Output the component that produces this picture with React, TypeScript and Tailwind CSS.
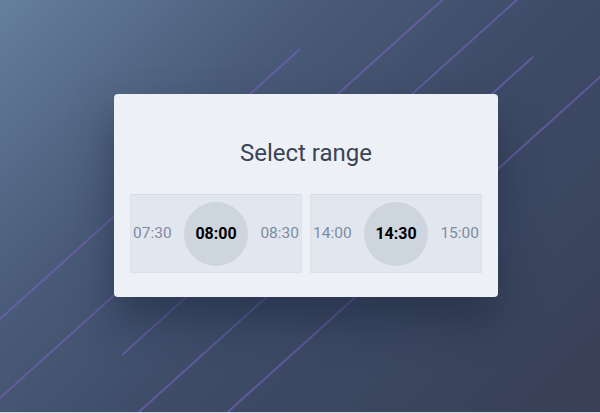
import React from "react";

const lines: [number, number, number, number][] = [
  [300, 49, -10, 328],
  [460, -16, -20, 416],
  [530, -12, 122, 355],
  [533, 57, 130, 420],
  [700, -13, 219, 420],
];

function Column({ prev, value, next }: { prev: string; value: string; next: string }) {
  return (
    <div className="flex h-[79px] flex-1 items-center justify-between border border-[#dde2ea] border-t-[#d6dce5] bg-[#e2e7ef] px-[2px] pt-px">
      <span className="text-[15.5px] text-[#7f8ba1]">{prev}</span>
      <div className="flex h-16 w-16 items-center justify-center rounded-full bg-[#cdd5df]">
        <span className="text-[16px] font-bold text-black">{value}</span>
      </div>
      <span className="text-[15.5px] text-[#7f8ba1]">{next}</span>
    </div>
  );
}

export default function App() {
  return (
    <div className="h-[413px] w-[600px] bg-[#d5d9e0] font-['Roboto',sans-serif]">
      <div className="relative flex h-[412px] w-full items-start overflow-hidden bg-[linear-gradient(135deg,#657f9c_0%,#4a5c7a_30%,#3e4c68_55%,#383f56_100%)] pl-[114px] pt-[94px]">
        {/* diagonal stripes */}
        <svg className="absolute inset-0" width="600" height="412">
          {lines.map(([x1, y1, x2, y2], i) => (
            <line key={i} x1={x1} y1={y1} x2={x2} y2={y2} stroke="#7462b8" strokeOpacity="0.65" strokeWidth="2" />
          ))}
        </svg>

        <div className="relative w-[384px] rounded-[4px] bg-[#edf1f6] px-4 pb-6 pt-[43px] shadow-[0_24px_40px_rgba(28,38,62,0.55)]">
          <h1 className="mb-[25px] text-center text-[24px] leading-8 font-normal text-[#3b4356]">Select range</h1>
          <div className="flex gap-2">
            <Column prev="07:30" value="08:00" next="08:30" />
            <Column prev="14:00" value="14:30" next="15:00" />
          </div>
        </div>
      </div>
    </div>
  );
}
